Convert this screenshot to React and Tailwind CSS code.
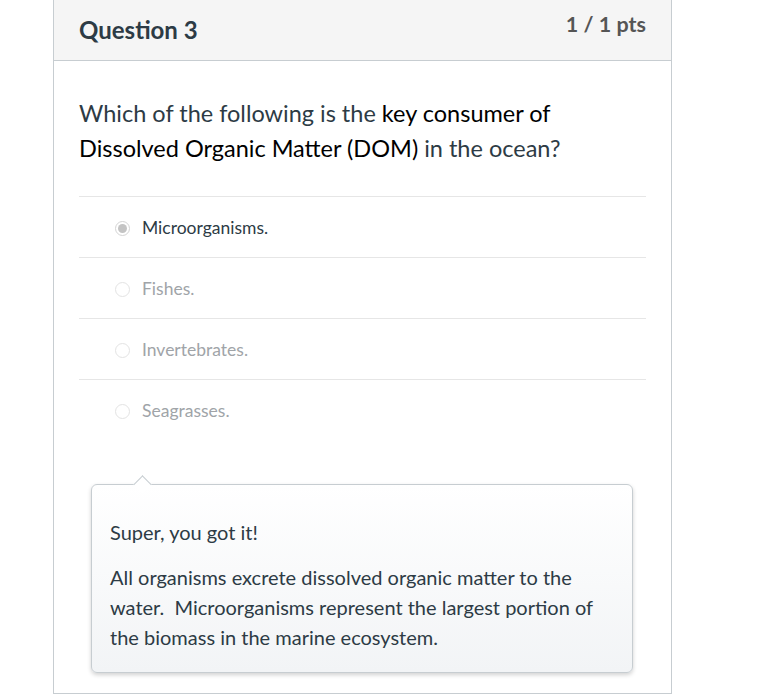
const OPTIONS = [
  { label: 'Microorganisms.', selected: true },
  { label: 'Fishes.' },
  { label: 'Invertebrates.' },
  { label: 'Seagrasses.' },
];

const Radio = ({ selected }) => (
  <span
    className={`w-[15px] h-[15px] rounded-full border flex items-center justify-center flex-shrink-0 ${
      selected ? 'border-[#d4d4d4] bg-white' : 'border-[#e3e3e3] bg-white'
    }`}
  >
    {selected && <span className="w-[9px] h-[9px] rounded-full bg-[#c4c4c4]" />}
  </span>
);

export default function App() {
  return (
    <div className="min-h-[696px] bg-white font-['Lato','Open_Sans',sans-serif] text-[#2d3b45]">
      <div className="ml-[53px] w-[619px] border-x border-b border-[#c7cdd1] pb-[20px]">
        {/* Header */}
        <div className="h-[61px] bg-[#f5f5f5] border-b border-[#c7cdd1] flex items-start justify-between px-[25px] pt-[14px]">
          <h2 className="text-[24px] font-bold leading-[32px] text-[#2d3b45]">Question 3</h2>
          <span className="text-[21.5px] font-bold leading-[24px] text-[#555] mt-[-2px]">1 / 1 pts</span>
        </div>

        <div className="px-[25px] pt-[35px]">
          <p className="text-[23.5px] leading-[35px] pr-[60px]">
            Which of the following is the <span className="text-black">key consumer of Dissolved Organic Matter (DOM)</span> in the ocean?
          </p>

          <div className="mt-[30px]">
            {OPTIONS.map((o) => (
              <div key={o.label} className="h-[61px] border-t border-[#e6e6e6] flex items-center gap-[12px] pl-[36px] pt-[2px]">
                <Radio selected={o.selected} />
                <span className={`text-[17.5px] ${o.selected ? 'text-[#2d3b45]' : 'text-[#a0a4a8]'}`}>{o.label}</span>
              </div>
            ))}
          </div>

          {/* Feedback */}
          <div className="relative mt-[44px] ml-[12px] mr-[13px] rounded-[6px] border border-[#c7cdd1] bg-gradient-to-b from-white to-[#f2f4f6] shadow-[0_2px_4px_rgba(0,0,0,0.18)] px-[18px] pt-[32px] pb-[20px]">
            <span className="absolute left-[44px] top-[-7px] w-[13px] h-[13px] rotate-45 bg-white border-l border-t border-[#c7cdd1]" />
            <p className="text-[20px] leading-[30px]">Super, you got it!</p>
            <p className="text-[20px] leading-[30px] mt-[15px]">
              All organisms excrete dissolved organic matter to the water.&nbsp; Microorganisms represent the largest portion of the biomass in the marine ecosystem.
            </p>
          </div>
        </div>
      </div>
    </div>
  );
}
